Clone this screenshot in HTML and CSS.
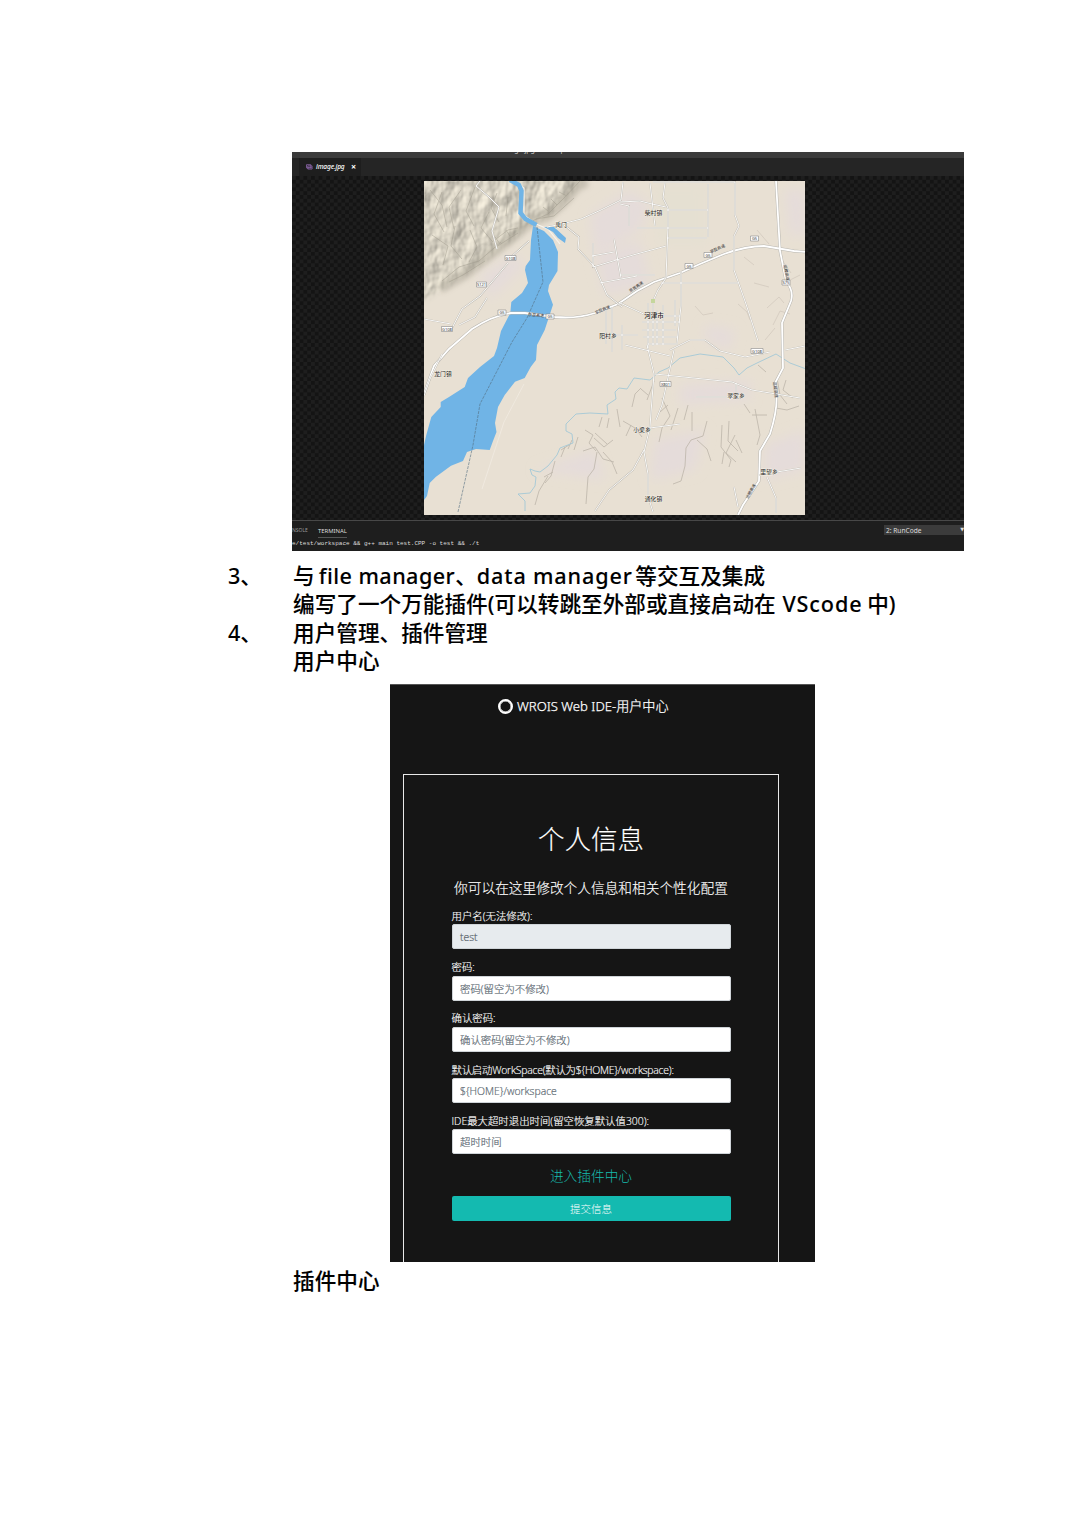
FILE: index.html
```html
<!DOCTYPE html>
<html lang="zh-CN">
<head>
<meta charset="utf-8">
<title>WROIS Web IDE</title>
<link rel="stylesheet" href="styles.css">
</head>
<body>
<main class="page">
  <section class="editor">
    <div class="titlebar"><span>image.jpg - workspace</span></div>
    <div class="tabs">
      <div class="tab">
        <svg class="tab-icon" viewBox="0 0 8 7"><path d="M.5.8h5v3.7h-5z M2 2.2h5v3.7H2z M2 5l2-1.4 1 1 1-.7 1 1" fill="none" stroke="#9068b0" stroke-width=".9"/></svg>
        <em>image.jpg</em><b>×</b>
      </div>
    </div>
    <div class="canvas">
      <svg class="map" viewBox="424 181 381 334">
        <defs>
          <filter id="relief" x="0" y="0" width="100%" height="100%" color-interpolation-filters="sRGB">
            <feTurbulence type="fractalNoise" baseFrequency=".07 .045" numOctaves="3" seed="12"/>
            <feColorMatrix values="0 0 0 0 0 0 0 0 0 0 0 0 0 0 0 1 0 0 0 0"/>
            <feDiffuseLighting surfaceScale="2" diffuseConstant="1.13" lighting-color="#e0dacb"><feDistantLight azimuth="225" elevation="58"/></feDiffuseLighting>
          </filter>
          <filter id="soft" x="-20%" y="-20%" width="140%" height="140%"><feGaussianBlur stdDeviation="6"/></filter>
          <filter id="edge" x="-20%" y="-20%" width="140%" height="140%"><feGaussianBlur stdDeviation="2.500"/></filter>
          <mask id="hills"><path d="M410 165H595L572 192 548 218 528 226 500 250 465 275 440 290 410 310Z" fill="#fff" filter="url(#edge)"/></mask>
        </defs>
        <rect x="424" y="181" width="381" height="334" fill="#e8e0d3"/>
        <g fill="#e5dcda" filter="url(#soft)">
          <path d="M590 215l40-25 20 15-10 25-45 25z M480 275l35-20 10 10-35 35z M595 255l45-15 10 45-45 10z M655 440l50-10-10 40-45 10z M765 445l40-15v40l-40 10z M680 385l70-5v20l-70 5z M705 325l30 5-5 20-25-10z M785 190h20v45h-15z M535 470l60-20 10 30z"/>
        </g>
        <path d="M655 185h50v60h-45z" fill="#e5e0d2" filter="url(#soft)"/>
        <g mask="url(#hills)"><rect x="424" y="181" width="190" height="130" filter="url(#relief)"/></g>
        <path d="M440 288l25-14 28-22 28-22 8-8 18-6 16-14 14-16 10-5" fill="none" stroke="#8f8a7c" stroke-width="11" opacity=".35" filter="url(#edge)"/>
        <g class="ridge">
          <path d="M530 222l18-8 16-16 16-17M536 219l18-3 20-18M492 242l16-12 10-2M496 247l22-14M442 281l17-14 20-6 22-19M449 282l14-7 22-14M548 211l-5-4M557 205l-6-6M567 196l-8-4M500 244l-5-7M510 236l-4-6"/>
          <path d="M430 190l12 15 5 22M442 192l-8 22 10 18M461 190l-12 17 5 22M475 187l-9 24 8 15M432 235l16 11-5 19M455 226l-4 20 11 13M470 230l7 17-8 15M489 212l-8 16 11 13M497 193l-6 15 8 14M508 197l-2 19"/>
        </g>
        <g class="gully">
          <path d="M585 430l8 5-4 8 7 8M594 438l10 9 9-7M583 451l12-4 8 12 11 3M597 452l-3 17-6 8-2 27M603 452l9 10 5 12M595 433l12 11M569 445l-8 5M565 447l-4 10M578 437l-4 13M572 440l-4 9M602 417l-3 10M609 418l-2 10M617 409l3 18M623 421l12 7 7 9M631 425l-5 11M555 461l-4 15-6 7M548 476l-9 15-4 14M553 472l-9 5"/>
          <path d="M707 421l-4 15-12 4-5 8-1 18-4 15-8 3M697 440l10 9 4 12M722 425l-1 22 10 13-2 7M729 421l-1 20 10 10M735 435l-9 18 10 9M736 440l6 13M724 452l-2 12M662 398l8 18-8 12-3 14M668 405l-8 7M678 408l-7 22M688 405l-4 15M692 412v19M648 395l-7-6M641 388l-6 6-3 13M654 381l-7 19M755 409l5 26-3 10M744 404l6 9M777 378l3 17 7 9M786 380l-3 10 10 8M776 408l11 2 12-4M767 415h-15M758 365l8 7"/>
        </g>
        <g class="gully faint"><path d="M695 306l8 9 10-2M738 304l9 8 3 8M767 308l12-11 5 6M773 325l7-14 10 3M765 340l10-12M744 257l10 8M757 230l12 14M754 283l15 4M782 260l9 13M790 280l10-5"/></g>
        <path class="water" d="M533 226L531 240 530 260 525.7 266 525 270 528 283 522 293 511.3 302 510.3 313 501 331 497 348 494 356 480 367 468 378 464.7 387 449 397 440.7 402V407L431.3 417 426.3 435 424 445V500L427 496 429.7 483 436 476.7 451 465.7 463 461 467 452 476 449 489.7 450 493 441 496.5 432 495 423 498 407 504.7 395 515 381.7 524.7 378 530.7 367 536 360 537 345 544.7 330 553 304.7 548 291 549 285 557.5 271 558 252 553 240 544 231Z"/>
        <path d="M513 181l11 7v27l12 9 12 5 12 15" fill="none" stroke="#f7f4ee" stroke-width="1.200"/>
        <path class="channel" d="M510 180l9 5 2.500 6-1 22 5 6 11 6"/>
        <path d="M544 227l10 0 12 11-1 5-7-5-5-6z" fill="#6fb3e5"/>
        <path class="stream" d="M525 511v-10l-7-7 12-1 5-7 1-9-4-2-2-6 5 2 5 1 8-6 9-11 3-7 13-5-1-9-6-3v-7l10-10 14-1 18 1-1-9 9-6-1-7 4-4 8 1 7-11 16 2 9-8 9-4 12-10 20-4 23 3 11 11 5 7 8-7 10-5 19-9 14 9 27 10"/>
        <g class="road-edge"><path d="M424 394l10-28 15-17 23-20 q20-13 39-16 h14l30 4q22 2 40-4l23-9 19-13 17-9 26-9 20-9 24-10q22-8 40-8l30 5 12 1"/><path d="M776 181l4 70 6 30 q8 10 5 20l-9 22 1 45-8 15 q5 20-5 51l-10 17-1 30-16 24-5 10"/></g>
        <g class="road"><path d="M424 394l10-28 15-17 23-20 q20-13 39-16 h14l30 4q22 2 40-4l23-9 19-13 17-9 26-9 20-9 24-10q22-8 40-8l30 5 12 1"/><path d="M776 181l4 70 6 30 q8 10 5 20l-9 22 1 45-8 15 q5 20-5 51l-10 17-1 30-16 24-5 10"/></g>
        <g class="minor-edge"><use href="#minor"/></g>
        <g class="minor"><g id="minor">
          <path d="M623 182l-2 18-20 10-20 9-19 5-15 3M564 225l15 12-1 12 17 18 12 28 15 12M593 243v24l40-12 33-9M592 256l22-4M614 239l7 39M600 283l37-7M650 183l5 43M665 183l-2 15 5 10v18l-2 52-8 12-5 11M653 182h82v33l4 11-5 10v34l12 34 12 37M708 184v53M667 210h41M637 228h71M667 238h40M620 202l20-1 12 3 14 3M629 226v-20l-9-2M620 275h35M661 283h77M681 271v35l-4 37M620 303l28 13h32"/>
          <path d="M648 303v45M653 299v47M657 310v35M663 305v40M642 322h38M642 330h34M643 337h35M648 344h30M675 300v26M625 345l45 11M612 307v45M606 309v35M600 335h38M622 325v25M670 350l20-10h15l15 11 25 6 25-5M655 374l77 8 20 8 48 8M696 397h48M736 383v13M647 345l7 29-3 38-1 15-6 25 4 22v22l5 16M674 350l-12 55-6 15M650 428l30-4M644 450l-11 20-24 20-14 21M785 350l20-4M759 475l42-7M767 477l9 21v15M734 487l4 20"/>
          <path d="M511 257l18-16M508 263l-28 33-18 13-11 21M424 319l27 5M487 298l-12 19-16 8M442 354l-12 25-6 17M480 181l-4 5 13 11 10 10-7 24 5 18"/>
        </g></g>
        <path d="M482 489l22-67 20-38" fill="none" stroke="#f2ede4" stroke-width=".7"/>
        <path d="M537 227l6 55-16 36-15 24-32 62-7 41-15 67" class="border"/>
        <g class="shields"><path d="M505 255.500h11v5h-11zM476.500 282h10v5h-10zM498 310h8v5h-8zM546 314h8v5h-8zM441.500 326.500h11v5h-11zM704 252.500h8v5h-8zM685 263.500h8v5h-8zM750.500 236h8v5h-8zM782 280h8v5h-8zM751 348.500h12v5h-12zM660 381.500h11v5h-11z"/></g>
        <g class="route"><text x="510.500" y="259.800">G108</text><text x="481.500" y="286.300">S121</text><text x="502" y="314.400">G5</text><text x="550" y="318.400">G5</text><text x="447" y="330.800">G108</text><text x="708" y="256.800">G5</text><text x="689" y="267.800">G5</text><text x="754.500" y="240.400">G5</text><text x="786" y="284.400">S75</text><text x="757" y="352.800">G108</text><text x="665.500" y="385.800">X801</text></g>
        <g class="route"><text x="536" y="316.500" transform="rotate(4 536 316)">京昆高速</text><text x="637" y="288" transform="rotate(-34 637 288)">京昆高速</text><text x="718" y="250" transform="rotate(-24 718 250)">京昆高速</text><text x="603" y="311" transform="rotate(-23 603 311)">京昆高速</text><text x="752" y="492" transform="rotate(-60 752 492)">运稷高速</text><text x="785" y="273" transform="rotate(80 785 273)">运稷高速</text><text x="774" y="390" transform="rotate(82 774 390)">运稷高速</text></g>
        <path d="M651 299h4v4h-4z" fill="#c5d69c"/>
        <g class="place"><text x="561" y="227">禹门</text><text x="653.500" y="214.700">柴村镇</text><text class="city" x="654" y="317.500">河津市</text><text x="608" y="337.700">阳村乡</text><text x="443" y="376.200">龙门镇</text><text x="642" y="432">小梁乡</text><text x="736" y="398">翠家乡</text><text x="769" y="474">里望乡</text><text x="653.500" y="500.500">通化镇</text></g>
      </svg>
    </div>
    <div class="terminal">
      <div class="terminal-head"><span class="console">NSOLE</span><span class="active">TERMINAL</span><span class="select">2: RunCode<i>▼</i></span></div>
      <div class="command">e/test/workspace &amp;&amp; g++ main test.CPP -o test &amp;&amp; ./t</div>
    </div>
  </section>

  <section class="notes">
    <span>3、</span><p>与 <span class="latin file">file manager</span>、<span class="latin data">data manager</span> 等交互及集成</p>
    <span></span><p>编写了一个万能插件(可以转跳至外部或直接启动在 <span class="latin code">VScode</span> 中)</p>
    <span>4、</span><p>用户管理、插件管理</p>
    <span></span><p>用户中心</p>
  </section>

  <section class="portal">
    <header class="brand"><i class="ring"></i><span>WROIS Web IDE-用户中心</span></header>
    <form class="card">
      <h1>个人信息</h1>
      <p class="intro">你可以在这里修改个人信息和相关个性化配置</p>
      <label>用户名(无法修改):</label><div class="field disabled">test</div>
      <label>密码:</label><div class="field">密码(留空为不修改)</div>
      <label>确认密码:</label><div class="field">确认密码(留空为不修改)</div>
      <label class="workspace">默认启动WorkSpace(默认为${HOME}/workspace):</label><div class="field">${HOME}/workspace</div>
      <label>IDE最大超时退出时间(留空恢复默认值300):</label><div class="field">超时时间</div>
      <a class="plugin">进入插件中心</a>
      <button type="button">提交信息</button>
    </form>
  </section>
  <p class="caption">插件中心</p>
</main>
</body>
</html>
```

FILE: styles.css
```css
* { box-sizing: border-box; }
body { margin: 0; background: #fff; color: #000; font-family: "Noto Sans", "Noto Sans CJK SC", sans-serif; }
p, h1 { margin: 0; }
.page { width: 1075px; height: 1520px; padding-top: 152px; overflow: hidden; }
.editor { width: 672px; height: 399px; margin-left: 292px; background: #1e1e1e; overflow: hidden; }
.titlebar { height: 6px; background: #3b3b3b; color: #ccc; font-size: 7px; line-height: 8px; overflow: hidden; padding-left: 210px; }
.titlebar span { display: block; margin-top: -6px; }
.tabs { height: 18px; background: #252525; padding-left: 7px; }
.tab { width: 62px; height: 18px; background: #1e1e1e; display: flex; align-items: center; padding-left: 7px; color: #fff; font-size: 6.6px; line-height: 18px; }
.tab-icon { width: 7px; height: 6px; margin-right: 3px; }
.tab em { width: 35px; letter-spacing: -.15px; font-weight: 500; }
.tab b { font-size: 9px; }
.canvas { height: 344px; padding: 5px 0 0 132px; background: conic-gradient(#141414 25%, #1e1e1e 0 50%, #141414 0 75%, #1e1e1e 0) 0 0 / 7.6px 7.6px; }
.map { display: block; width: 381px; height: 334px; }
.ridge { fill: none; stroke: #9d988a; stroke-width: 1; opacity: .45; }
.gully { fill: none; stroke: #bdb5aa; stroke-width: .8; }
.faint { opacity: .5; }
.water { fill: #70b4e6; }
.channel { fill: none; stroke: #70b4e6; stroke-width: 4.5; }
.stream { fill: none; stroke: #9bc5d7; stroke-width: .8; }
.road-edge { fill: none; stroke: #b8b6b0; stroke-width: 2.8; }
.road { fill: none; stroke: #fff; stroke-width: 1.8; }
.minor-edge { fill: none; stroke: #bebab1; stroke-width: 1.7; }
.minor { fill: none; stroke: #fff; stroke-width: .9; }
.border { fill: none; stroke: #526d80; stroke-width: .6; stroke-dasharray: 3 1; }
.shields { fill: #fff; stroke: #888; stroke-width: .6; }
.route { font: 4px "Noto Sans", "Noto Sans CJK SC", sans-serif; fill: #333; stroke: none; text-anchor: middle; }
.place { font: 5.8px "Noto Sans CJK SC", sans-serif; fill: #222; text-anchor: middle; paint-order: stroke; stroke: #f5f0e5; stroke-width: .8; }
.city { font-size: 6.5px; font-weight: 500; }
.terminal { height: 31px; border-top: 1px solid #484848; background: #1e1e1e; color: #ddd; }
.terminal-head { display: flex; height: 18px; align-items: center; font-size: 6px; }
.console { width: 26px; color: #999; font-size: 5px; }
.active { width: 29px; height: 15px; line-height: 16px; border-bottom: 1px solid #555; font-size: 5.9px; }
.select { width: 80px; height: 10px; margin-left: auto; padding-left: 2px; background: #3b3b3b; line-height: 11px; font-size: 6.6px; display: flex; justify-content: space-between; }
.select i { font: 5px/9px "DejaVu Sans", sans-serif; }
.command { font: 6px/10px "Liberation Mono", monospace; white-space: nowrap; }
.notes { margin: 11px 0 0 228px; height: 122px; display: grid; grid-template-columns: 65px 1fr; grid-auto-rows: 28.35px; font-size: 21.6px; line-height: 28.6px; font-weight: 500; white-space: nowrap; }
.notes p, .caption { font-weight: 500; letter-spacing: .04px; -webkit-text-stroke: .1px #000; }
.notes .file { letter-spacing: .45px; margin-left: -1.5px; }
.notes .data { letter-spacing: .85px; margin-right: -3px; }
.notes .code { letter-spacing: .9px; margin-left: 1px; margin-right: -1px; }
.portal { width: 425px; height: 578px; margin-left: 390px; background: #151515; border-top: 1px solid #555; color: #fff; padding-left: 13px; overflow: hidden; font-family: "Open Sans", "Noto Sans CJK SC", sans-serif; font-weight: 300; }
.brand { height: 89px; display: flex; gap: 4px; padding: 14px 0 0 95px; font-size: 13.1px; line-height: 15px; white-space: nowrap; }
.brand span { font-family: "Noto Sans", "Noto Sans CJK SC", sans-serif; font-weight: 300; -webkit-text-stroke: .25px #fff; }
.ring { width: 15px; height: 15px; border: 2px solid #fff; border-radius: 50%; box-shadow: inset 0 0 0 .5px #fff; }
.card { width: 376px; height: 520px; border: 1px solid #e8e8e8; border-bottom: 0; padding: 43px 47.5px 0; display: flex; flex-direction: column; }
h1 { height: 42px; font-size: 26.5px; line-height: 42px; font-weight: 300; text-align: center; -webkit-text-stroke: .15px #fff; }
.intro { height: 38px; margin-top: 9px; line-height: 37px; font-size: 13.7px; text-align: center; white-space: nowrap; -webkit-text-stroke: .15px #fff; }
label { height: 17.4px; flex: none; line-height: 19px; font-size: 10.4px; white-space: nowrap; -webkit-text-stroke: .15px #fff; }
.workspace { letter-spacing: -.22px; }
.field { height: 25px; flex: none; margin-bottom: 8.8px; padding: 0 7.5px; border: 1px solid #cfd4d8; border-radius: 2px; background: #fff; color: #606b74; line-height: 24px; font-size: 10.4px; -webkit-text-stroke: .2px #606b74; }
.disabled { background: #e7ebee; color: #50585f; }
.plugin { height: 25px; line-height: 25px; color: #17baae; text-align: center; font-size: 13.7px; }
button { height: 25px; margin-top: 8px; border: 0; border-radius: 2px; padding: 0; background: #14bab0; color: #fff; font: 300 10.5px/25px "Noto Sans CJK SC", sans-serif; }
.caption { margin: 5px 0 0 293px; font-size: 21.6px; line-height: 28px; }
```
